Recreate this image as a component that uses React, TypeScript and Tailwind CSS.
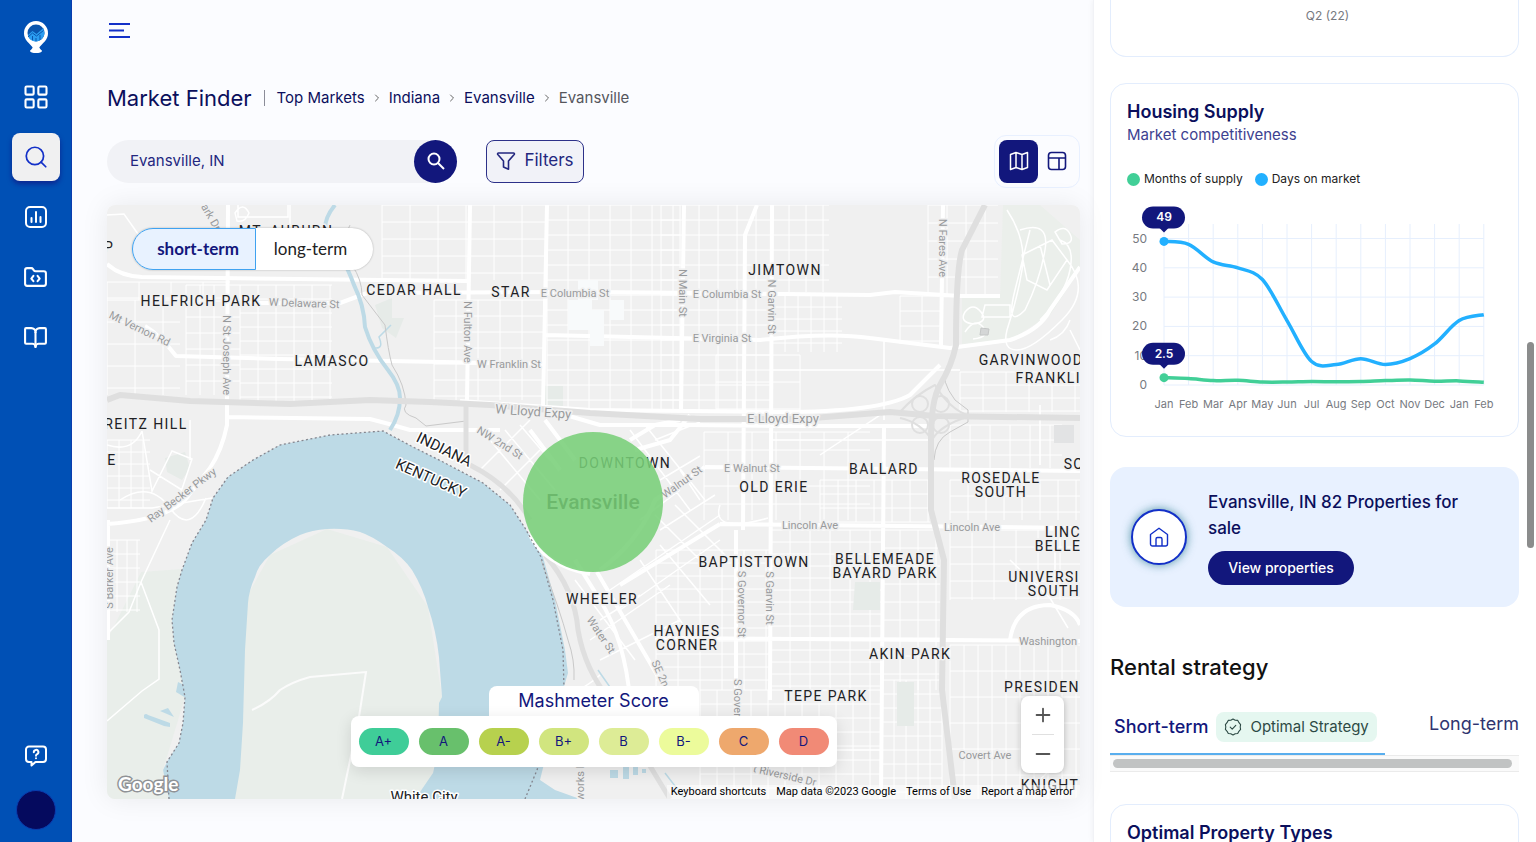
import * as React from "react"
import { useState } from "react"
import { BookOpen, ChevronRight, FolderCode, LayoutGrid, Minus, Plus, Search } from "lucide-react"
import { clsx } from "clsx"

type Term = "short-term" | "long-term"
type Point = [number, number]

const GRADES = [
  { label: "A+", className: "bg-[#3fcd98]" },
  { label: "A", className: "bg-[#68c06c]" },
  { label: "A-", className: "bg-[#b7d14e]" },
  { label: "B+", className: "bg-[#d1e57f]" },
  { label: "B", className: "bg-[#ddec96]" },
  { label: "B-", className: "bg-[#ecfb9b]" },
  { label: "C", className: "bg-[#eea86d]" },
  { label: "D", className: "bg-[#f18a76]" },
]

const MONTHS = ["Jan", "Feb", "Mar", "Apr", "May", "Jun", "Jul", "Aug", "Sep", "Oct", "Nov", "Dec", "Jan", "Feb"]
const DAYS_ON_MARKET = [49, 48, 42, 40, 36, 22, 8, 7, 9, 7, 9, 14, 22, 24]
const MONTHS_OF_SUPPLY = [2.5, 2.2, 1.5, 1.6, 1, 1, 1.2, 1.1, 1.2, 1.5, 1.7, 1.3, 1.4, 0.9]

function LogoIcon() {
  return (
    <svg width="26" height="34" viewBox="0 0 26 34" aria-hidden="true">
      <path d="M13 1a12 12 0 0 1 12 12.500c0 6.500-5.500 9.500-9.500 15h-5C6.500 23 1 20 1 13.500A12 12 0 0 1 13 1Z" fill="#fff" />
      <path d="M10 27h6l2.500 4h-11Z" fill="#fff" />
      <ellipse cx="13" cy="31" rx="6" ry="2" fill="#fff" />
      <circle cx="13" cy="13" r="8.500" fill="#0a55ad" />
      <path d="M5 15l4.500-4 4 3 7-6 1 5c-.3 4.500-3.500 8-8.500 8.500-4.500-.2-7.500-3-8-6.500Z" fill="#2b9df0" />
      <path d="M5 17l4.500-4 4 3 7-5.500M9.500 16v4M13 18v3M17 15v5" stroke="#0a55ad" strokeWidth="1" fill="none" />
    </svg>
  )
}

function ReportIcon() {
  return (
    <svg width="24" height="24" viewBox="0 0 24 24" fill="none" stroke="currentColor" strokeWidth="2" strokeLinecap="round" aria-hidden="true">
      <rect x="2" y="2" width="20" height="20" rx="4" />
      <path d="M7.500 17v-4M12 17V7M16.500 17v-5" />
    </svg>
  )
}

function HelpIcon() {
  return (
    <svg width="24" height="24" viewBox="0 0 24 24" fill="none" stroke="currentColor" strokeWidth="2" strokeLinecap="round" strokeLinejoin="round" aria-hidden="true">
      <path d="M5 2.500h14a3 3 0 0 1 3 3V15a3 3 0 0 1-3 3h-7.500L7.500 21.500V18H5a3 3 0 0 1-3-3V5.500a3 3 0 0 1 3-3Z" />
      <path d="M9.800 8.200a2.300 2.300 0 1 1 3.400 2c-.9.500-1.200.9-1.200 1.600M12 14.200v.1" />
    </svg>
  )
}

function FilterIcon() {
  return (
    <svg width="20" height="20" viewBox="0 0 20 20" fill="none" stroke="currentColor" strokeWidth="1.600" strokeLinejoin="round" aria-hidden="true">
      <path d="M2.500 2h15c.8 0 1.200.9.700 1.500L12.500 10v8.200L7.500 16v-6L1.800 3.500C1.300 2.900 1.700 2 2.500 2Z" />
    </svg>
  )
}

function MapIcon() {
  return (
    <svg width="20" height="20" viewBox="0 0 20 20" fill="none" stroke="currentColor" strokeWidth="1.500" strokeLinejoin="round" aria-hidden="true">
      <path d="M1.500 3.500 7 1.500l6 2 5.500-2v15L13 18.500l-6-2-5.500 2ZM7 1.500v15M13 3.500v15" />
    </svg>
  )
}

function HomeIcon() {
  return (
    <svg width="20" height="20" viewBox="0 0 20 20" fill="none" stroke="currentColor" strokeWidth="1.400" strokeLinejoin="round" aria-hidden="true">
      <path d="M1.500 7.500 10 1.200l8.500 6.300V17a2 2 0 0 1-2 2h-13a2 2 0 0 1-2-2Z" />
      <path d="M7 19v-7a1.500 1.500 0 0 1 1.500-1.500h3A1.500 1.500 0 0 1 13 12v7" />
    </svg>
  )
}

function VerifiedIcon() {
  return (
    <svg width="18" height="18" viewBox="0 0 18 18" fill="none" stroke="currentColor" strokeWidth="1.100" strokeLinecap="round" strokeLinejoin="round" aria-hidden="true">
      <path d="M9 1l2.200 1.200 2.600.2 1.200 2.300 1.600 2L16.200 9l.4 2.400-1.700 1.900-1.200 2.200-2.500.3L9 17l-2.200-1.200-2.500-.3-1.200-2.200-1.700-1.900L1.800 9l-.4-2.300 1.600-2 1.200-2.300 2.600-.2Z" />
      <path d="m6.200 9.200 2 1.900 3.600-3.800" />
    </svg>
  )
}

function SideLink({ label, children, active }: { label: string; children: React.ReactNode; active?: boolean }) {
  return (
    <a
      href="#"
      aria-label={label}
      className={clsx(
        "flex h-12 w-12 items-center justify-center rounded-lg",
        active ? "bg-[#f0f0f1] text-[#1330c8] shadow-[0_3px_5px_rgba(20,10,120,0.6)]" : "text-white"
      )}
    >
      {children}
    </a>
  )
}

function Sidebar() {
  return (
    <nav className="flex w-18 shrink-0 flex-col items-center border-r border-[#0a3cae] bg-[#0050b5] pt-5 pb-3">
      <a href="#" aria-label="Home" className="mb-[19px]">
        <LogoIcon />
      </a>
      <div className="flex flex-col gap-3">
        <SideLink label="Dashboard">
          <LayoutGrid size={28} strokeWidth={1.8} />
        </SideLink>
        <SideLink label="Market finder" active>
          <Search size={26} strokeWidth={1.6} />
        </SideLink>
        <SideLink label="Reports">
          <ReportIcon />
        </SideLink>
        <SideLink label="Projects">
          <FolderCode size={25} />
        </SideLink>
        <SideLink label="Guides">
          <BookOpen size={25} />
        </SideLink>
      </div>
      <div className="mt-auto flex flex-col items-center gap-2.5">
        <SideLink label="Help">
          <HelpIcon />
        </SideLink>
        <button type="button" aria-label="Account" className="h-10 w-10 rounded-full border border-[#0a3cae] bg-[#050a5e]" />
      </div>
    </nav>
  )
}

// Residential street blocks: x0, y0, x1, y1, column step, row step
const BLOCKS = [
  [240, 285, 332, 405, 18, 14],
  [186, 285, 240, 395, 14, 16],
  [382, 205, 545, 280, 28, 17],
  [434, 300, 545, 400, 22, 16],
  [547, 205, 680, 410, 21, 15],
  [661, 205, 772, 410, 19, 15],
  [772, 205, 829, 292, 17, 15],
  [772, 295, 842, 352, 13, 12],
  [928, 205, 998, 296, 19, 18],
  [900, 296, 942, 344, 22, 15],
  [716, 355, 800, 412, 28, 27],
  [704, 432, 870, 520, 24, 18],
  [960, 372, 1080, 412, 23, 13],
  [950, 425, 1062, 468, 20, 15],
  [656, 550, 770, 690, 22, 13],
  [770, 530, 882, 690, 20, 12],
  [882, 530, 940, 690, 18, 18],
  [950, 530, 1080, 600, 22, 17],
  [950, 645, 1080, 799, 14, 26],
  [700, 690, 880, 799, 17, 14],
  [882, 680, 942, 799, 12, 14],
  [820, 480, 930, 522, 18, 14],
  [950, 480, 1080, 520, 18, 16],
  [107, 440, 150, 508, 12, 12],
  [107, 540, 140, 612, 10, 14],
  [107, 300, 180, 395, 28, 22],
  [107, 282, 230, 300, 32, 16],
] as const

function blockPath([x0, y0, x1, y1, dx, dy]: readonly number[]) {
  let d = ""
  for (let x = x0; x <= x1; x += dx) d += `M${x} ${y0}V${y1}`
  for (let y = y0; y <= y1; y += dy) d += `M${x0} ${y}H${x1}`
  return d
}

const MINOR_ROADS = [
  "M107 215L124 214L138 234M235 213q8-12 14 0q-4 10-12 8ZM238 205v12h50v-12M290 205v22",
  "M107 445q25 8 35-14M142 431l10 60l20-40l20 8l-15 45M190 420v40M120 500q30-20 50 8t36-10M150 470l40 25",
  "M490 440l50 60M505 430l50 60M520 425l30 35M480 470l50-50M500 490l40-40M107 508h45l60-10",
  "M630 430l60 80M645 425l60 75M655 440l45-18M610 590l110-75M620 610l100-70M640 560l60 90M660 545l50 60M675 505l50 50M655 515l55 55",
  "M590 640l80-55M600 660l80-40M575 580l60 80M640 520l40-30M660 530l55-35M680 470l20 30M600 620l40-25",
  "M560 700q30-15 40-25M660 480l40-24M820 455l60-40v-5M884 420v-80M770 370h190M770 440h160M1010 560l40 38l18 30M1055 590v-60",
  "M1007 210q20 30 15 60t-15 60q-5 20 10 20t45-30t5-60M1020 230q30-10 25 20t-20 60q-20 20-10-20t15-60M1060 240q15 5 10 30t-30 50M965 312q8-10 16 0t-8 12q-14-2-8-12M965 332q10-15 18-5t-10 12M985 305h25v12h-28ZM1022 255l30-15l15 20l-20 30l-20-10ZM1040 245l10 40M1055 232q10-8 15 2t-8 10Z",
  "M1040 405v60M1050 340q15-5 20-20M1070 330l10 20M720 505q-5 15 8 18t40-5M1060 760l-40 39M720 750h160",
  "M107 721l35-30l17-12V630L141 582L170 520M141 582l-12 30l-22 22",
]

const MAJOR_ROADS = [
  "M107 264Q120 276 142 277L467 281",
  "M250 303H340L367 293L590 292L700 293L870 295L895 292L960 296L1000 296",
  "M145 326Q160 335 176 356L280 359L545 364",
  "M545 335L760 340Q830 332 870 338L950 348L1010 340Q1040 330 1050 310L1080 267",
  "M228 205L227 408V425Q222 450 210 468L185 500Q165 520 107 524M108 520V640",
  "M470 205L467 400M547 205L543 408M684 205L681 412M772 205L770 700M757 205L745 235L743 530",
  "M943 205L941 345M226 417L370 419Q390 424 410 430L500 430M460 401L590 410L780 412Q880 412 910 395L940 365",
  "M705 467L1080 471M720 524L1080 528M655 638L1080 641M884 425L881 799M736 530V700",
  "M705 467L655 500Q640 540 600 570M720 524L620 585M597 572L660 680L680 720M575 560L600 600Q625 640 630 700",
  "M530 430L560 470M545 420L575 460M690 415L670 440L635 450M680 420L655 425L630 440M1010 640Q1015 605 1050 605Q1075 610 1080 625",
  "M545 409L600 425L690 425L780 426L930 426",
]

const HIGHWAYS = [
  "M107 400L120 395L190 401L290 404L370 400L430 402L490 405L590 413L700 419L800 419L890 412L935 416L1080 418",
  "M985 205L962 250Q956 270 956 345Q952 365 940 385Q931 400 931 440V510L944 560L942 690L948 740L955 799",
]

const RIVER =
  "M169 799L163 770L168 760L179 743L183 723L185 697L180 670L174 643L172 620L177 587L182 570L192 543L206 520L213 498L228 477L253 460L280 445L330 435L383 431L413 447L443 462L483 483L510 505L525 528L543 557L555 600L565 650L568 673L563 690L545 760L540 780L555 790L580 799H418L420 792L433 773L438 750L439 703L442 697L439 657Q436 630 428 607Q423 588 412 570Q403 557 387 547Q372 536 360 532Q345 528 327 529Q312 530 300 535Q282 543 270 555Q258 565 255 577Q249 590 248 603L245 650L243 723L240 770L235 799Z"

const STATE_LINE =
  "M169 799L167 762L179 743L183 723L185 697L180 670L174 643L172 620L177 587L182 570L192 543L206 520L213 498L228 477L253 460L280 445L330 435L383 431L413 447L443 462L483 483L510 505L525 528L541 557L553 600L563 650L564 690L537 770L525 799"

const AREA_LABELS: [string, number, number][] = [
  ["MT. AUBURN", 286, 236],
  ["HELFRICH PARK", 201, 306],
  ["CEDAR HALL", 414, 295],
  ["STAR", 511, 297],
  ["LAMASCO", 332, 366],
  ["REITZ HILL", 146, 429],
  ["E", 112, 465],
  ["P", 109, 252],
  ["JIMTOWN", 785, 275],
  ["GARVINWOOD", 1031, 365],
  ["FRANKLIN", 1054, 383],
  ["DOWNTOWN", 625, 468],
  ["BALLARD", 884, 474],
  ["OLD ERIE", 774, 492],
  ["ROSEDALE", 1001, 483],
  ["SOUTH", 1001, 497],
  ["SO", 1074, 469],
  ["LINC", 1063, 537],
  ["BELLE", 1058, 551],
  ["BAPTISTTOWN", 754, 567],
  ["BELLEMEADE", 885, 564],
  ["BAYARD PARK", 885, 578],
  ["UNIVERSI", 1044, 582],
  ["SOUTH", 1054, 596],
  ["WHEELER", 602, 604],
  ["HAYNIES", 687, 636],
  ["CORNER", 687, 650],
  ["AKIN PARK", 910, 659],
  ["TEPE PARK", 826, 701],
  ["PRESIDEN", 1042, 692],
  ["KNIGHT", 1050, 790],
]

// Street name, center x, baseline y, rotation
const STREET_LABELS: [string, number, number, number][] = [
  ["ark Dr", 208, 219, 60],
  ["W Delaware St", 304, 307, 2],
  ["Mt Vernon Rd", 138, 332, 26],
  ["N St Joseph Ave", 223, 355, 90],
  ["N Fulton Ave", 464, 332, 90],
  ["E Columbia St", 575, 297, 0],
  ["E Columbia St", 727, 298, 0],
  ["E Virginia St", 722, 342, 0],
  ["W Franklin St", 509, 368, 0],
  ["N Main St", 679, 293, 90],
  ["N Garvin St", 768, 307, 90],
  ["N Fares Ave", 939, 248, 90],
  ["NW 2nd St", 498, 446, 32],
  ["E Walnut St", 752, 472, 0],
  ["Walnut St", 684, 485, -36],
  ["Lincoln Ave", 810, 529, 0],
  ["Lincoln Ave", 972, 531, 0],
  ["Ray Becker Pkwy", 184, 498, -37],
  ["S Barker Ave", 113, 578, -90],
  ["S Governor St", 738, 604, 90],
  ["S Garvin St", 766, 598, 90],
  ["S Gover", 734, 698, 90],
  ["Water St", 598, 637, 56],
  ["SE 2n", 657, 675, 66],
  ["Washington", 1048, 645, 0],
  ["Covert Ave", 985, 759, 0],
  ["t Riverside Dr", 784, 779, 13],
  ["works Rd", 584, 778, -90],
]

function CityMap() {
  return (
    <svg
      viewBox="107 205 973 594"
      preserveAspectRatio="xMidYMid slice"
      className="h-full w-full font-[Roboto,sans-serif]"
      role="img"
      aria-label="Map of Evansville"
    >
      <rect x="107" y="205" width="973" height="594" fill="#f0f0f0" />
      <path d="M107 640L141 572L182 569L172 620L185 697L163 770L169 799H107Z" fill="#e9eeea" />
      <path d="M235 799L243 723L245 600L270 555L327 529L387 547L428 607L442 697L433 773L418 799Z" fill="#e9eeea" />
      <path d="M1003 205H1040L1080 240V270L1050 315L1010 340L962 344V298H1000Z" fill="#ebefeb" />
      <path d="M375 305l17-7v20h12l-8 20l-14-10ZM165 458l20-6l5 16l-8 12l-15-8ZM545 386h18v20h-18Z" fill="#e6ebe8" />
      <g fill="none" stroke="#fff">
        <path d={BLOCKS.map(blockPath).join("")} strokeWidth="1" />
        <path d={MINOR_ROADS.join("")} strokeWidth="1.500" />
        <path d={MAJOR_ROADS.join("")} strokeWidth="4" strokeLinejoin="round" />
      </g>
      <path d="M855 582h25v28h-27ZM897 682h17v44h-17Z" fill="#e6ebe8" />
      <path d="M1054 425h20v18h-20Z" fill="#e2e3e4" />
      <path d="M568 300h24v30h-24ZM578 280h20v20h-20ZM590 310h14v36h-14ZM610 300h14v20h-14Z" fill="#f8fafb" />
      <path d={RIVER} fill="#bddae6" />
      <path d="M144 715q2-2 4 0l22 8v4l-6-1l-20-8ZM160 711l8-3l6 9ZM178 682l8 4v12l-10-6Z" fill="#bddae6" />
      <path d="M535 799l5-12l26 12Z" fill="#bddae6" />
      <g fill="none" stroke="#bddae6">
        <path d="M335 205Q325 217 325 229Q345 260 354 285Q364 305 365 327Q372 350 388 370Q400 385 400 398Q400 415 390 430" strokeWidth="4" />
        <path d="M391 325l-12 12q5 12-4 11M598 670l14 20M665 773l20 26" strokeWidth="1.500" />
      </g>
      <path d="M610 770h8v8h-8ZM623 767h6v12h-6ZM633 767h5v8h-5ZM642 769h4v4h-4Z" fill="#bddae6" />
      <g fill="none" stroke="#c9c9c9" strokeWidth="1">
        <path d="M350 225Q340 240 352 265Q362 280 362 295L385 325Q388 350 392 365Q405 385 406 405q-6 8 10 13l10 8l40-5M541 560Q560 610 568 640Q575 660 574 680" />
        <path d="M947 370Q940 380 955 400L968 410V422L950 432Q935 440 934 460" />
      </g>
      <g fill="none" stroke="#dfdfdf" strokeLinejoin="round">
        <path d={HIGHWAYS.join("")} strokeWidth="6" />
        <path d="M466 402V460M470 465Q510 485 530 520M545 555Q575 590 578 630Q585 670 610 700L670 799" strokeWidth="5" />
        <path d="M900 412Q915 395 935 385Q950 410 970 416Q940 425 932 440Q920 422 900 418" strokeWidth="2" />
        <circle cx="920" cy="404" r="8" strokeWidth="2" />
        <circle cx="941" cy="404" r="8" strokeWidth="2" />
        <circle cx="920" cy="425" r="8" strokeWidth="2" />
        <circle cx="941" cy="425" r="8" strokeWidth="2" />
      </g>
      <path d="M981 328l8 1l-1 6h-8Z" fill="#d4d6d6" stroke="#c4c6c6" />
      <path d="M252 710Q270 702 280 690Q292 682 310 677L366 672L359 717L342 799" fill="none" stroke="#fbfbfb" strokeWidth="2" />
      <path d="M530 535Q545 565 590 574" fill="none" stroke="#fff" strokeWidth="4" />
      <path d={STATE_LINE} fill="none" stroke="#85868f" strokeWidth="1.300" strokeDasharray="2 2.500" />

      <g textAnchor="middle" stroke="#f0f0f0" strokeWidth="3" strokeLinejoin="round" className="[paint-order:stroke]">
        <g className="text-[11px]" fill="#989a9c">
          {STREET_LABELS.map(([name, x, y, angle], i) => (
            <text key={i} x={x} y={y} transform={`rotate(${angle} ${x} ${y})`}>
              {name}
            </text>
          ))}
        </g>
        <g className="text-[13px]" fill="#989a9c">
          <text x="533" y="416" transform="rotate(4 533 416)">W Lloyd Expy</text>
          <text x="783" y="423">E Lloyd Expy</text>
        </g>
        <g className="text-sm tracking-widest" fill="#202124">
          {AREA_LABELS.map(([name, x, y], i) => (
            <text key={i} x={x} y={y}>
              {name}
            </text>
          ))}
        </g>
        <g className="text-[15px]" fill="#202124" stroke="#fff">
          <text x="442" y="454" transform="rotate(26 442 454)">INDIANA</text>
          <text x="429" y="483" transform="rotate(24 429 483)">KENTUCKY</text>
          <text x="424" y="802">White City</text>
        </g>
        <text x="593" y="509" className="text-[21px] font-medium" fill="#202124">
          Evansville
        </text>
      </g>
      <circle cx="593" cy="502" r="70" fill="#78cf78" fillOpacity="0.87" />
      <text
        x="118"
        y="791"
        className="font-['Lato',sans-serif] text-[19px] font-bold [paint-order:stroke]"
        fill="#fff"
        stroke="#8f9296"
        strokeWidth="3"
      >
        Google
      </text>
    </svg>
  )
}

function TermToggle({ term, onChange }: { term: Term; onChange: (term: Term) => void }) {
  return (
    <div className="absolute top-[23px] left-[25px] flex h-[42px] rounded-full bg-white font-['Lato',sans-serif] text-[17px] shadow-[0_0_2px_rgba(0,0,0,0.3)]">
      <button
        type="button"
        onClick={() => onChange("short-term")}
        className={clsx(
          "w-[124px] rounded-l-full border pl-2",
          term === "short-term" ? "border-[#3fa2f0] bg-[#e8f2ff] font-bold text-[#12177c]" : "border-transparent"
        )}
      >
        short-term
      </button>
      <button
        type="button"
        onClick={() => onChange("long-term")}
        className={clsx(
          "w-[117px] rounded-r-full border pr-2",
          term === "long-term" ? "border-[#3fa2f0] bg-[#e8f2ff] font-bold text-[#12177c]" : "border-transparent text-[#222]"
        )}
      >
        long-term
      </button>
    </div>
  )
}

function ScoreLegend() {
  return (
    <div className="absolute bottom-8 left-1/2 flex -translate-x-1/2 flex-col items-center text-[#12177c]">
      <div className="flex h-[30px] w-[210px] items-center justify-center rounded-t-lg bg-white text-lg">
        Mashmeter Score
      </div>
      <ul className="flex gap-2.5 rounded-lg bg-white px-2 py-3 shadow-[0_4px_16px_rgba(0,0,0,0.12)]">
        {GRADES.map((grade) => (
          <li
            key={grade.label}
            className={clsx("flex h-[27px] w-[50px] items-center justify-center rounded-full text-[13px]", grade.className)}
          >
            {grade.label}
          </li>
        ))}
      </ul>
    </div>
  )
}

function MarketMap() {
  const [term, setTerm] = useState<Term>("short-term")

  return (
    <section className="relative mb-[43px] min-h-0 flex-1 overflow-clip rounded-lg shadow-[0_0_28px_rgba(0,0,0,0.08)]">
      <div className="absolute inset-0">
        <CityMap />
      </div>
      <TermToggle term={term} onChange={setTerm} />
      <ScoreLegend />
      <div className="absolute right-4 bottom-[26px] flex w-[43px] flex-col items-center rounded-lg bg-white text-[#555] shadow-[0_1px_6px_rgba(0,0,0,0.25)]">
        <button type="button" aria-label="Zoom in" className="flex h-[38px] w-full items-center justify-center">
          <Plus size={22} />
        </button>
        <div className="h-px w-[22px] bg-[#e0e0e0]" />
        <button type="button" aria-label="Zoom out" className="flex h-[38px] w-full items-center justify-center">
          <Minus size={22} />
        </button>
      </div>
      <div className="absolute right-0 bottom-0 flex gap-2.5 bg-white/50 pr-[7px] pl-1 font-[Roboto,sans-serif] text-[11px] leading-[14px] text-black">
        <button type="button">Keyboard shortcuts</button>
        <span>Map data ©2023 Google</span>
        <a href="#">Terms of Use</a>
        <a href="#">Report a map error</a>
      </div>
    </section>
  )
}

function Breadcrumbs() {
  return (
    <div className="flex h-8 items-center text-[#0b0f5c]">
      <h1 className="text-[22px]">Market Finder</h1>
      <div className="mx-3 h-4 w-px bg-[#8b8c98]" />
      <nav aria-label="Breadcrumb" className="flex items-center gap-1.5 text-[15px]">
        {["Top Markets", "Indiana", "Evansville"].map((crumb) => (
          <React.Fragment key={crumb}>
            <a href="#">{crumb}</a>
            <ChevronRight size={12} className="text-[#666]" />
          </React.Fragment>
        ))}
        <span className="text-[#55565c]">Evansville</span>
      </nav>
    </div>
  )
}

function Toolbar() {
  const [view, setView] = useState<"map" | "table">("map")

  return (
    <div className="flex h-[54px] items-center">
      <form className="flex h-[43px] w-[350px] items-center rounded-full bg-[#f1f2f6]" onSubmit={(e) => e.preventDefault()}>
        <input
          aria-label="Search markets"
          defaultValue="Evansville, IN"
          className="min-w-0 flex-1 bg-transparent pl-[23px] text-[15px] text-[#23277f] outline-none"
        />
        <button type="submit" aria-label="Search" className="flex h-[43px] w-[43px] items-center justify-center rounded-full bg-[#12177c] text-white">
          <svg width="18" height="18" viewBox="0 0 18 18" fill="none" stroke="currentColor" strokeWidth="2" aria-hidden="true">
            <circle cx="7" cy="7" r="5.500" />
            <path d="m11 11 6 6" />
          </svg>
        </button>
      </form>
      <button
        type="button"
        className="ml-[29px] flex h-[43px] w-[98px] items-center justify-center gap-2 rounded-lg border border-[#2d3189] bg-[#f1f2f8] text-[17px] text-[#23277f]"
      >
        <FilterIcon />
        Filters
      </button>
      <div className="ml-auto flex rounded-xl border border-[#e8f0ff] p-1 text-[#12177c]">
        <button
          type="button"
          aria-label="Map view"
          onClick={() => setView("map")}
          className={clsx("flex h-[43px] w-[39px] items-center justify-center rounded-lg", view === "map" && "bg-[#12177c] text-white")}
        >
          <MapIcon />
        </button>
        <button
          type="button"
          aria-label="Table view"
          onClick={() => setView("table")}
          className={clsx("flex h-[43px] w-[37px] items-center justify-center rounded-lg", view === "table" && "bg-[#12177c] text-white")}
        >
          <svg width="20" height="20" viewBox="0 0 20 20" fill="none" stroke="currentColor" strokeWidth="1.600" aria-hidden="true">
            <rect x="1.500" y="1.500" width="17" height="17" rx="3" />
            <path d="M1.500 7h17M12 7v11.500" />
          </svg>
        </button>
      </div>
    </div>
  )
}

const chartX = (i: number) => 53 + i * 24.6
const chartY = (value: number) => 189 - value * 2.93

function smoothPath(values: number[]) {
  const pts: Point[] = values.map((v, i) => [chartX(i), chartY(v)])
  let d = `M${pts[0][0]} ${pts[0][1]}`
  for (let i = 0; i < pts.length - 1; i++) {
    const prev = pts[Math.max(i - 1, 0)]
    const next = pts[Math.min(i + 2, pts.length - 1)]
    const [x1, y1] = pts[i]
    const [x2, y2] = pts[i + 1]
    d += `C${x1 + (x2 - prev[0]) / 6} ${y1 + (y2 - prev[1]) / 6} ${x2 - (next[0] - x1) / 6} ${y2 - (next[1] - y1) / 6} ${x2} ${y2}`
  }
  return d
}

function ChartMarker({ value, color }: { value: number; color: string }) {
  const x = chartX(0)
  const y = chartY(value)
  return (
    <g>
      <circle cx={x} cy={y} r="4.500" fill={color} />
      <rect x={x - 22} y={y - 35} width="43" height="22" rx="11" fill="#12177c" />
      <path d={`M${x - 5} ${y - 14}h10l-5 5Z`} fill="#12177c" />
      <text x={x} y={y - 20} fill="#fff" textAnchor="middle" className="text-xs font-semibold">
        {value}
      </text>
    </g>
  )
}

function SupplyChart() {
  return (
    <svg viewBox="0 0 407 240" className="w-full text-xs" role="img" aria-label="Housing supply by month">
      <g stroke="#e6effd" strokeWidth="1">
        {MONTHS.map((_, i) => (
          <line key={i} x1={chartX(i)} x2={chartX(i)} y1="28" y2={chartY(0)} />
        ))}
        {[0, 10, 20, 30, 40, 50].map((v) => (
          <line key={v} x1={chartX(0)} x2={chartX(13)} y1={chartY(v)} y2={chartY(v)} />
        ))}
      </g>
      <g fill="#777a7f">
        {[0, 10, 20, 30, 40, 50].map((v) => (
          <text key={v} x="36" y={chartY(v) + 4} textAnchor="end">
            {v}
          </text>
        ))}
        {MONTHS.map((month, i) => (
          <text key={i} x={chartX(i)} y="212" textAnchor="middle" className="text-[11px]">
            {month}
          </text>
        ))}
      </g>
      <path d={smoothPath(MONTHS_OF_SUPPLY)} fill="none" stroke="#41cf97" strokeWidth="3.500" />
      <path d={smoothPath(DAYS_ON_MARKET)} fill="none" stroke="#22b0ff" strokeWidth="3.500" />
      <ChartMarker value={49} color="#22b0ff" />
      <ChartMarker value={2.5} color="#41cf97" />
    </svg>
  )
}

function HousingSupplyCard() {
  return (
    <section className="mt-[26px] rounded-2xl border border-[#e3edfd] bg-white">
      <div className="px-4 pt-4">
        <h2 className="text-lg leading-6 font-semibold text-[#0b0f5c]">Housing Supply</h2>
        <p className="text-[15px] leading-[22px] text-[#3d4190]">Market competitiveness</p>
        <div className="mt-6 flex items-center gap-3 text-xs leading-[18px] text-[#222]">
          <span className="flex items-center gap-1">
            <i className="h-[13px] w-[13px] rounded-full bg-[#41cf97]" />
            Months of supply
          </span>
          <span className="flex items-center gap-1">
            <i className="h-[13px] w-[13px] rounded-full bg-[#22b0ff]" />
            Days on market
          </span>
        </div>
      </div>
      <div className="mt-2">
        <SupplyChart />
      </div>
    </section>
  )
}

function PropertiesCard() {
  return (
    <section className="mt-[30px] flex items-center gap-[21px] rounded-2xl bg-[#e8f1ff] py-[22px] pr-8 pl-[21px]">
      <div className="flex h-14 w-14 shrink-0 items-center justify-center rounded-full border-2 border-[#1330c8] bg-white text-[#1330c8] shadow-[0_0_10px_rgba(20,110,130,0.7)]">
        <HomeIcon />
      </div>
      <div>
        <p className="text-[17px] leading-[26px] font-medium text-[#0b0f5c]">Evansville, IN 82 Properties for sale</p>
        <button type="button" className="mt-2.5 h-[34px] w-[146px] rounded-full bg-[#12177c] text-sm font-medium text-white">
          View properties
        </button>
      </div>
    </section>
  )
}

function RentalStrategy() {
  return (
    <section className="mt-11">
      <h2 className="text-[22px] leading-8 font-medium text-[#111]">Rental strategy</h2>
      <div className="mt-6 flex h-[48px] overflow-hidden whitespace-nowrap">
        <button type="button" className="flex w-[275px] shrink-0 items-center gap-2 border-b-2 border-[#59aeee] pb-1.5 pl-1 text-lg font-medium text-[#12177c]">
          Short-term
          <span className="flex h-[30px] items-center gap-2 rounded-lg bg-[#e5f7f0] px-2 text-[15px] font-normal text-[#2d4a45]">
            <VerifiedIcon />
            Optimal Strategy
          </span>
        </button>
        <button type="button" className="ml-auto pb-3.5 text-lg text-[#30346f]">
          Long-term
        </button>
      </div>
      <div className="border-y border-[#ebebeb] bg-[#fafafa] p-[3px]">
        <div className="mr-1 h-[9px] rounded-full bg-[#c1c3c3]" />
      </div>
    </section>
  )
}

function MarketDetails() {
  return (
    <aside className="flex w-[443px] shrink-0 flex-col overflow-hidden border-l border-[#f1f2f6] bg-white pr-[17px] pl-4 shadow-[0_0_6px_rgba(0,0,0,0.06)] *:shrink-0">
      <section className="h-[57px] rounded-b-2xl border border-t-0 border-[#e3edfd] pt-2 pl-[26px] text-center text-xs text-[#777a7f]">
        Q2 (22)
      </section>
      <HousingSupplyCard />
      <PropertiesCard />
      <RentalStrategy />
      <section className="mt-[32px] h-40 rounded-2xl border border-[#e3edfd] px-4 pt-4">
        <h2 className="text-lg leading-6 font-semibold text-[#0b0f5c]">Optimal Property Types</h2>
      </section>
    </aside>
  )
}

export default function App() {
  return (
    <div className="relative flex h-screen overflow-hidden bg-[#fbfcff] font-['Inter',sans-serif]">
      <Sidebar />
      <main className="flex min-w-0 flex-1 flex-col pr-[13px] pl-[35px]">
        <button type="button" aria-label="Toggle menu" className="mt-[22px] h-4 w-6 text-[#1330c8]">
          <svg width="24" height="16" viewBox="0 0 24 16" stroke="currentColor" strokeWidth="2" aria-hidden="true">
            <path d="M2 2h21M2 8.500h15M2 15h21" />
          </svg>
        </button>
        <div className="mt-11 mb-5">
          <Breadcrumbs />
        </div>
        <Toolbar />
        <div className="mt-[17px] flex min-h-0 flex-1 flex-col">
          <MarketMap />
        </div>
      </main>
      <MarketDetails />
      <div className="absolute top-[342px] right-0.5 h-[206px] w-[7px] rounded-full bg-[#8b8c8c]" />
    </div>
  )
}
